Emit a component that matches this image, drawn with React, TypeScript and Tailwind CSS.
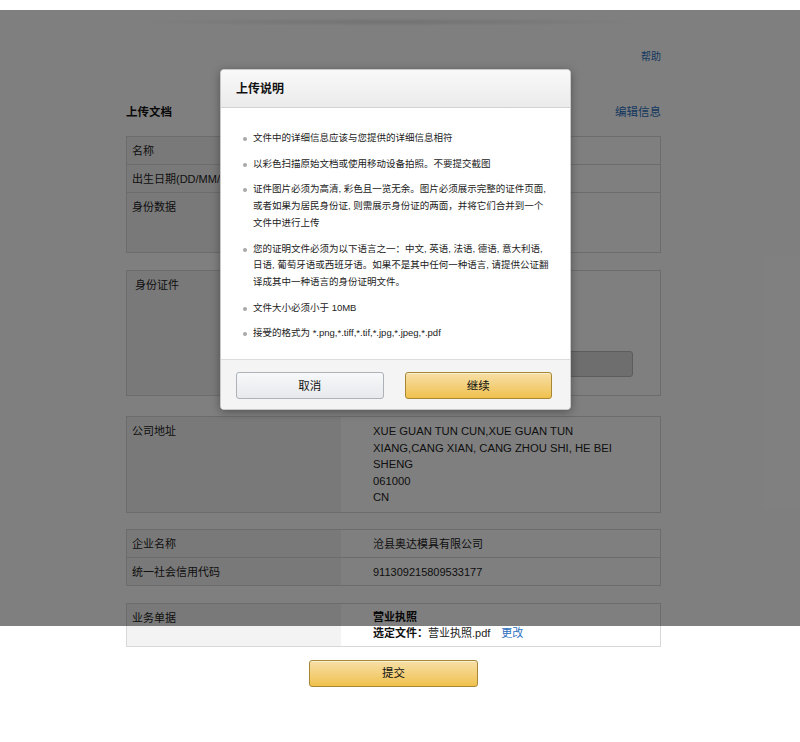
import type { ReactNode } from 'react'
import clsx from 'clsx'

interface RowProps {
    label?: ReactNode
    children?: ReactNode
    className?: string
    labelClassName?: string
    valueClassName?: string
}

// one label / value line of the summary tables
function Row ({ label, children, className, labelClassName, valueClassName }: RowProps) {
    return (
        <div className={clsx('flex', className)}>
            <div className={clsx('w-[214px] shrink-0 bg-[#f3f3f3] px-[5px]', labelClassName)}>{label}</div>
            <div className={clsx('flex-1 pl-[32px]', valueClassName)}>{children}</div>
        </div>
    )
}

const notes: string[][] = [
    ['文件中的详细信息应该与您提供的详细信息相符'],
    ['以彩色扫描原始文档或使用移动设备拍照。不要提交截图'],
    [
        '证件图片必须为高清, 彩色且一览无余。图片必须展示完整的证件页面,',
        '或者如果为居民身份证, 则需展示身份证的两面，并将它们合并到一个',
        '文件中进行上传',
    ],
    [
        '您的证明文件必须为以下语言之一：中文, 英语, 法语, 德语, 意大利语,',
        '日语, 葡萄牙语或西班牙语。如果不是其中任何一种语言, 请提供公证翻',
        '译成其中一种语言的身份证明文件。',
    ],
    ['文件大小必须小于 10MB'],
    ['接受的格式为 *.png,*.tiff,*.tif,*.jpg,*.jpeg,*.pdf'],
]

const address = [
    'XUE GUAN TUN CUN,XUE GUAN TUN',
    'XIANG,CANG XIAN, CANG ZHOU SHI, HE BEI',
    'SHENG',
    '061000',
    'CN',
]

const yellowBtn = 'rounded-[3px] border border-[#a88734] bg-linear-to-b from-[#f7dfa5] to-[#f0c14b] text-[11.5px] text-[#111] shadow-[inset_0_1px_0_rgba(255,255,255,0.5)]'

function UploadModal () {
    return (
        <div className="absolute left-[220px] top-[69px] w-[351px] overflow-hidden rounded-[4px] border border-[#c8c8c8] bg-white shadow-[0_2px_10px_rgba(0,0,0,0.35)]">
            <div className="flex h-[38px] items-center border-b border-[#d2d2d2] bg-linear-to-b from-[#f9f9f9] to-[#ebebeb] px-[15px] text-[12px] font-bold text-[#111]">
                上传说明
            </div>
            <ul className="space-y-[9px] px-[22px] pt-[22px] pb-[17px] text-[9.5px] leading-[16.7px] text-[#222]">
                {notes.map((lines, i) => (
                    <li key={i} className="flex">
                        <span className="mt-[7px] h-[4px] w-[4px] shrink-0 rounded-full bg-[#a8a8a8]" />
                        <p className="ml-[6px] whitespace-nowrap">
                            {lines.map((line, j) => (
                                <span key={j} className="block">{line}</span>
                            ))}
                        </p>
                    </li>
                ))}
            </ul>
            <div className="flex gap-[21px] border-t border-[#dcdcdc] bg-[#f4f4f4] pt-[12px] pr-[18px] pb-[10px] pl-[15px]">
                <button className="h-[27px] w-[148px] rounded-[3px] border border-[#adb1b8] bg-linear-to-b from-[#f7f8fa] to-[#e7e9ec] text-[11.5px] text-[#111]">
                    取消
                </button>
                <button className={clsx('h-[27px] w-[148px]', yellowBtn)}>继续</button>
            </div>
        </div>
    )
}

export default function App () {
    return (
        <div className="relative h-[742px] w-full overflow-hidden bg-white font-[family-name:'Liberation_Sans','Noto_Sans_CJK_SC',sans-serif] text-[11px] leading-[16px] text-[#222]">
            <div className="ml-[126px] w-[535px]">
                {/* header shadow */}
                <div className="mt-[18px] ml-[10px] h-[8px] w-[510px] bg-[radial-gradient(ellipse_at_center,rgba(0,0,0,0.1)_0%,rgba(0,0,0,0.04)_45%,rgba(0,0,0,0)_72%)]" />

                <p className="mt-[24px] text-right text-[10px] leading-[14px] text-[#2a6fbf]">帮助</p>

                <div className="mt-[40px] flex items-center justify-between text-[11.5px]">
                    <h2 className="font-bold text-[#111]">上传文档</h2>
                    <a className="text-[#2a6fbf]">编辑信息</a>
                </div>

                <div className="mt-[16px] border border-[#d8d8d8]">
                    <Row labelClassName="pt-[6px] pb-[5px]" label="名称" />
                    <Row className="border-t border-[#d8d8d8]" labelClassName="pt-[6px] pb-[5px]" label="出生日期(DD/MM/YYYY)" />
                    <Row className="h-[60px] border-t border-[#d8d8d8]" labelClassName="pt-[6px]" label="身份数据" />
                </div>

                <div className="mt-[17px] h-[126px] border border-[#d8d8d8]">
                    <Row
                        className="h-full"
                        labelClassName="px-[8px] pt-[6px]"
                        valueClassName="flex flex-col justify-end pb-[18px]"
                        label="身份证件"
                    >
                        <div className="h-[26px] w-[260px] rounded-[3px] border border-[#b9b9b9] bg-[#dcdcdc]" />
                    </Row>
                </div>

                <div className="mt-[20px] border border-[#d8d8d8]">
                    <Row labelClassName="py-[6px]" valueClassName="py-[6px] text-[11.25px] leading-[16.5px]" label="公司地址">
                        {address.map(line => (
                            <span key={line} className="block whitespace-nowrap">{line}</span>
                        ))}
                    </Row>
                </div>

                <div className="mt-[16px] border border-[#d8d8d8]">
                    <Row labelClassName="pt-[6px] pb-[5px]" valueClassName="pt-[6px] pb-[5px]" label="企业名称">
                        沧县奥达模具有限公司
                    </Row>
                    <Row className="border-t border-[#d8d8d8]" labelClassName="pt-[6px] pb-[5px]" valueClassName="pt-[6px] pb-[5px]" label="统一社会信用代码">
                        911309215809533177
                    </Row>
                </div>

                <div className="mt-[17px] border border-[#d8d8d8]">
                    <Row labelClassName="py-[6px]" valueClassName="py-[5px]" label="业务单据">
                        <p className="font-bold text-[#111]">营业执照</p>
                        <p>
                            <span className="font-bold text-[#111]">选定文件：</span>
                            营业执照.pdf
                            <a className="ml-[11px] text-[#2a6fbf]">更改</a>
                        </p>
                    </Row>
                </div>

                <div className="mt-[13px] flex justify-center">
                    <button className={clsx('h-[27px] w-[169px]', yellowBtn)}>提交</button>
                </div>
            </div>

            {/* dim layer, stops short of the page bottom as in the capture */}
            <div className="absolute inset-x-0 top-[10px] h-[616px] bg-black/50" />

            <UploadModal />
        </div>
    )
}
